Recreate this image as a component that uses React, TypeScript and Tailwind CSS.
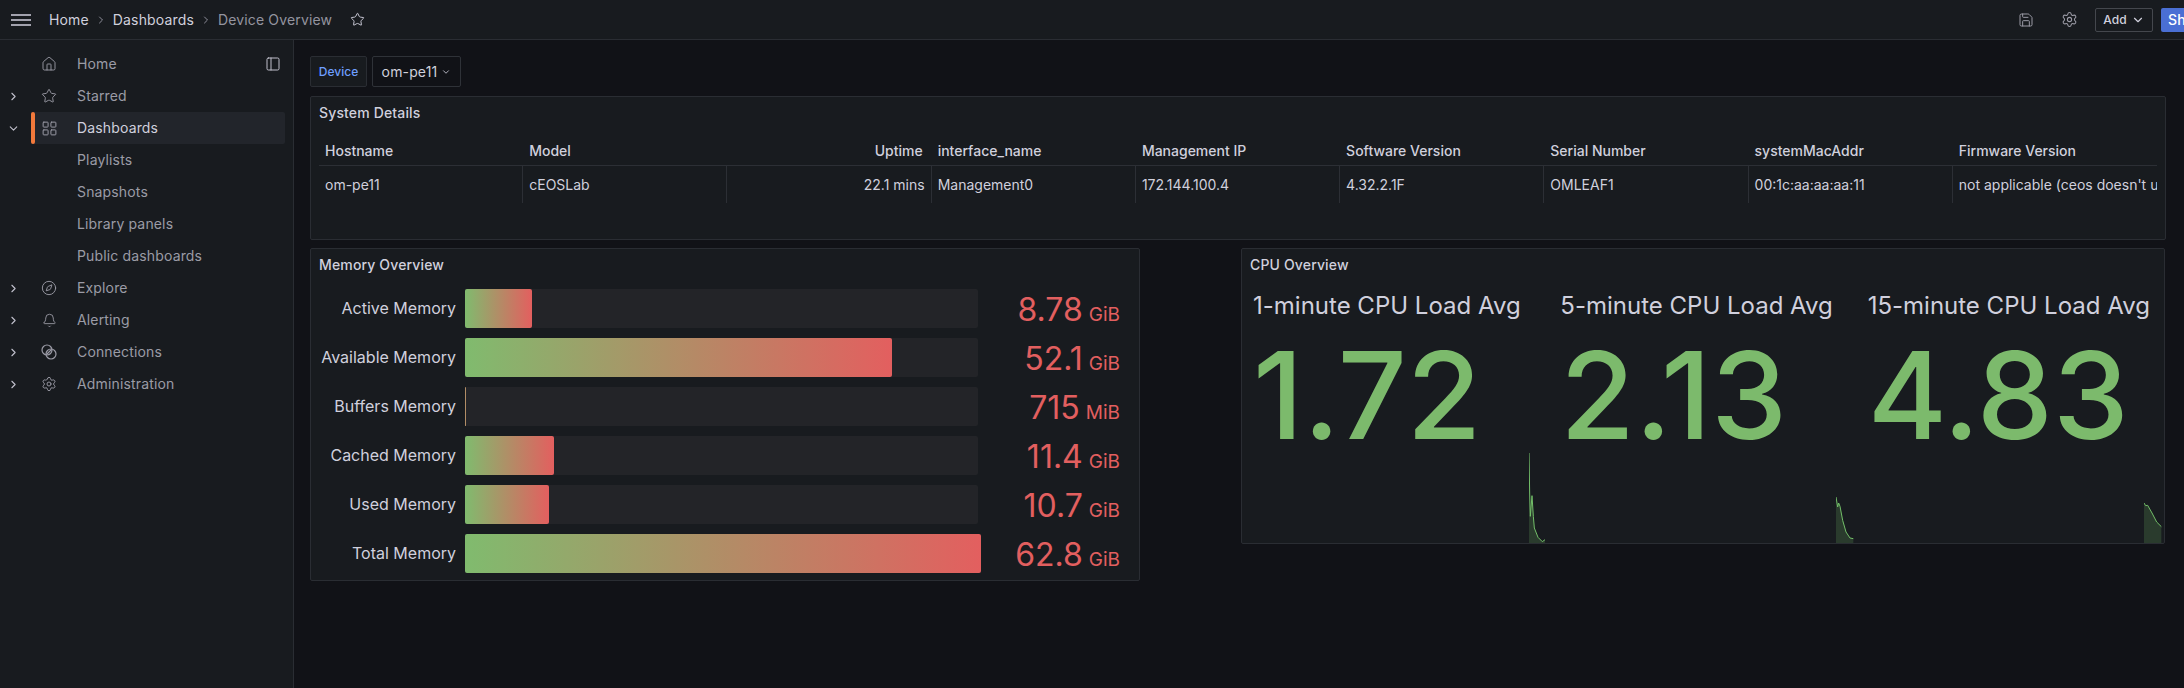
import { Bell, ChevronDown, ChevronRight, Compass, Home, LayoutGrid, PanelLeft, Save, Settings, Star } from "lucide-react";
import type { ReactNode } from "react";

// Grafana's "connections" glyph: two linked rings with a slash
function ConnectionsIcon() {
  return (
    <svg width="16" height="16" viewBox="0 0 16 16" fill="none" stroke="currentColor" strokeWidth="1.2">
      <circle cx="6" cy="6" r="5" />
      <circle cx="10" cy="10" r="5" />
      <path d="M5.5 10.5l5-5" />
    </svg>
  );
}

const navItems: { label: string; icon?: ReactNode; arrow?: "right" | "down"; active?: boolean }[] = [
  { label: "Home", icon: <Home size={16} strokeWidth={1.4} /> },
  { label: "Starred", icon: <Star size={16} strokeWidth={1.4} />, arrow: "right" },
  { label: "Dashboards", icon: <LayoutGrid size={17} strokeWidth={1.4} />, arrow: "down", active: true },
  { label: "Playlists" },
  { label: "Snapshots" },
  { label: "Library panels" },
  { label: "Public dashboards" },
  { label: "Explore", icon: <Compass size={16} strokeWidth={1.4} />, arrow: "right" },
  { label: "Alerting", icon: <Bell size={15} strokeWidth={1.4} />, arrow: "right" },
  { label: "Connections", icon: <ConnectionsIcon />, arrow: "right" },
  { label: "Administration", icon: <Settings size={16} strokeWidth={1.4} />, arrow: "right" },
];

const columns = [
  { name: "Hostname", value: "om-pe11" },
  { name: "Model", value: "cEOSLab" },
  { name: "Uptime", value: "22.1 mins", right: true },
  { name: "interface_name", value: "Management0" },
  { name: "Management IP", value: "172.144.100.4" },
  { name: "Software Version", value: "4.32.2.1F" },
  { name: "Serial Number", value: "OMLEAF1" },
  { name: "systemMacAddr", value: "00:1c:aa:aa:aa:11" },
  { name: "Firmware Version", value: "not applicable (ceos doesn't use firmware)" },
];

const memory = [
  { label: "Active Memory", fill: 67, value: "8.78", unit: "GiB" },
  { label: "Available Memory", fill: 427, value: "52.1", unit: "GiB" },
  { label: "Buffers Memory", fill: 1, value: "715", unit: "MiB" },
  { label: "Cached Memory", fill: 89, value: "11.4", unit: "GiB" },
  { label: "Used Memory", fill: 84, value: "10.7", unit: "GiB" },
  { label: "Total Memory", fill: 516, value: "62.8", unit: "GiB" },
];

const cpu = [
  {
    label: "1-minute CPU Load Avg",
    value: "1.72",
    w: 20,
    h: 90,
    box: "0 0 60 270",
    line: "M0 0L2 120L4 190L9 128L13 190L16 225L27 253L40 266L48 260",
    area: "M0 0L2 120L4 190L9 128L13 190L16 225L27 253L40 266L48 260V270H0Z",
  },
  {
    label: "5-minute CPU Load Avg",
    value: "2.13",
    w: 18,
    h: 46,
    box: "0 0 54 138",
    line: "M0 0L5 30L8 18L12 28L20 70L30 105L42 123L52 125",
    area: "M0 0L5 30L8 18L12 28L20 70L30 105L42 123L52 125V138H0Z",
  },
  {
    label: "15-minute CPU Load Avg",
    value: "4.83",
    w: 18,
    h: 40,
    box: "0 0 54 120",
    line: "M0 0L5 8L11 7L24 30L38 57L52 71",
    area: "M0 0L5 8L11 7L24 30L38 57L52 71V120H0Z",
  },
];

function TopBar() {
  return (
    <header className="flex h-[40px] items-center border-b border-[#2a2d33] bg-[#181b1f] pl-[11px] text-sm tracking-[0.15px] text-[#d0d0dd]">
      <svg width="20" height="12" viewBox="0 0 20 12" stroke="#d0d0dd" strokeWidth="1.6">
        <path d="M0 1h20M0 6h20M0 11h20" />
      </svg>
      <span className="ml-[18px]">Home</span>
      <ChevronRight size={12} className="mx-[6px] text-[#8e8e9a]" />
      <span>Dashboards</span>
      <ChevronRight size={12} className="mx-[6px] text-[#8e8e9a]" />
      <span className="text-[#94949f]">Device Overview</span>
      <Star size={15} strokeWidth={1.5} className="ml-[18px]" />
      <div className="ml-auto mr-[-50px] flex items-center">
        <Save size={16} strokeWidth={1.5} className="mr-[27px] text-[#9b9ba6]" />
        <Settings size={17} strokeWidth={1.5} className="mr-[17px] text-[#9b9ba6]" />
        <button className="flex h-[24px] w-[58px] items-center justify-center gap-[4px] rounded-[2px] border border-[#44474d] text-xs font-medium">
          Add
          <ChevronDown size={14} />
        </button>
        <button className="ml-[8px] h-[24px] w-[73px] rounded-[2px] bg-[#4a6fd4] pl-[7px] text-left text-sm font-medium text-white">Share</button>
      </div>
    </header>
  );
}

function Sidebar() {
  return (
    <aside className="relative w-[294px] shrink-0 border-r border-[#2a2d33] bg-[#181b1f] pt-[8px] text-sm tracking-[0.15px] text-[#9b9ba6]">
      {navItems.map((item) => (
        <div key={item.label} className="flex h-[32px] items-center">
          <span className="flex w-[26px] shrink-0 justify-center text-[#c0c0cc]">
            {item.arrow === "right" && <ChevronRight size={13} />}
            {item.arrow === "down" && <ChevronDown size={13} />}
          </span>
          <div className={`ml-[5px] flex h-[32px] w-[254px] items-center ${item.active ? "rounded-[2px] bg-[#22252b] text-[#d0d0dd]" : ""}`}>
            <span className={`h-[32px] w-[4px] rounded-[2px] ${item.active ? "bg-[#f2793b]" : ""}`} />
            <span className="flex w-[28px] justify-center text-[#9b9ba6]">{item.icon}</span>
            <span className="ml-[14px]">{item.label}</span>
          </div>
        </div>
      ))}
      <PanelLeft size={16} strokeWidth={1.5} className="absolute left-[265px] top-[16px] text-[#c0c0cc]" />
    </aside>
  );
}

function SystemDetails() {
  return (
    <section className="h-[144px] w-[1856px] rounded-[2px] border border-[#2a2d33] bg-[#181b1f]">
      <h2 className="flex h-[32px] items-center px-[8px] text-sm font-medium tracking-[0.15px] text-[#d0d0dd]">System Details</h2>
      <div className="ml-[8px] mt-[8px] w-[1838px] overflow-hidden text-sm text-[#d0d0dd]">
        <div className="grid h-[29px] grid-cols-9 items-center border-b border-[#2c2f35] font-medium">
          {columns.map((col) => (
            <div key={col.name} className={`px-[6px] ${col.right ? "pr-[9px] text-right" : ""}`}>
              {col.name}
            </div>
          ))}
        </div>
        <div className="grid h-[37px] grid-cols-9 items-center">
          {columns.map((col, i) => (
            <div
              key={col.name}
              className={`flex h-full items-center overflow-hidden whitespace-nowrap px-[6px] ${col.right ? "justify-end" : ""} ${i < 8 ? "border-r border-[#2c2f35]" : ""}`}
            >
              {col.value}
            </div>
          ))}
        </div>
      </div>
    </section>
  );
}

function MemoryOverview() {
  return (
    <section className="h-[333px] w-[830px] shrink-0 rounded-[2px] border border-[#2a2d33] bg-[#181b1f]">
      <h2 className="flex h-[32px] items-center px-[8px] text-sm font-medium tracking-[0.15px] text-[#d0d0dd]">Memory Overview</h2>
      <div className="mt-[8px] flex flex-col gap-[10px]">
        {memory.map((row) => (
          <div key={row.label} className="flex h-[39px] items-center">
            <span className="mb-[2px] w-[145px] whitespace-nowrap text-right text-base text-[#d0d0dd]">{row.label}</span>
            <div className="relative ml-[9px] h-[39px] w-[513px] rounded-[2px] bg-[#232428]">
              <div
                className="absolute inset-y-0 left-0 rounded-[2px] bg-linear-to-r/srgb from-[#80bb6e] to-[#e35f5f]"
                style={{ width: row.fill }}
              />
            </div>
            <span className="ml-auto mr-[19px] mt-[2px] flex items-baseline gap-[6px] text-[#e25f5f]">
              <span className="text-[32px] leading-none">{row.value}</span>
              <span className="text-[19px] leading-none">{row.unit}</span>
            </span>
          </div>
        ))}
      </div>
    </section>
  );
}

function CpuOverview() {
  return (
    <section className="flex h-[296px] w-[924px] flex-col rounded-[2px] border border-[#2a2d33] bg-[#181b1f]">
      <h2 className="flex h-[32px] shrink-0 items-center px-[8px] text-sm font-medium tracking-[0.15px] text-[#d0d0dd]">CPU Overview</h2>
      <div className="grid flex-1 grid-cols-3">
        {cpu.map((tile) => (
          <div key={tile.label} className="relative overflow-hidden pl-[11px] pt-[10px]">
            <div className="whitespace-nowrap text-[24px] leading-[30px] text-[#d0d0dd]">{tile.label}</div>
            <div className="mt-[10px] text-[121px] font-medium leading-[128px] text-[#7cba6c]">{tile.value}</div>
            <svg
              className="absolute bottom-0 left-[287px]"
              width={tile.w}
              height={tile.h}
              viewBox={tile.box}
              fill="none"
            >
              <path d={tile.area} fill="#73bf69" fillOpacity="0.2" />
              <path d={tile.line} stroke="#73bf69" strokeWidth="3" />
            </svg>
          </div>
        ))}
      </div>
    </section>
  );
}

export default function App() {
  return (
    <div className="flex h-[688px] w-[2184px] flex-col overflow-hidden bg-[#111217] [font-family:Inter,sans-serif]">
      <TopBar />
      <div className="flex flex-1">
        <Sidebar />
        <main className="flex flex-col pl-[16px] pt-[16px]">
          <div className="mb-[9px] flex h-[31px] gap-[5px] text-sm">
            <div className="flex w-[57px] items-center justify-center rounded-[2px] border border-[#2a2d33] bg-[#181b1f] text-xs font-medium text-[#6e9fff]">
              Device
            </div>
            <div className="flex w-[89px] items-center justify-center gap-[4px] rounded-[2px] border border-[#2f3238] tracking-[0.15px] text-[#d0d0dd]">
              om-pe11
              <ChevronDown size={10} />
            </div>
          </div>
          <SystemDetails />
          <div className="mt-[8px] flex items-start gap-[101px]">
            <MemoryOverview />
            <CpuOverview />
          </div>
        </main>
      </div>
    </div>
  );
}
